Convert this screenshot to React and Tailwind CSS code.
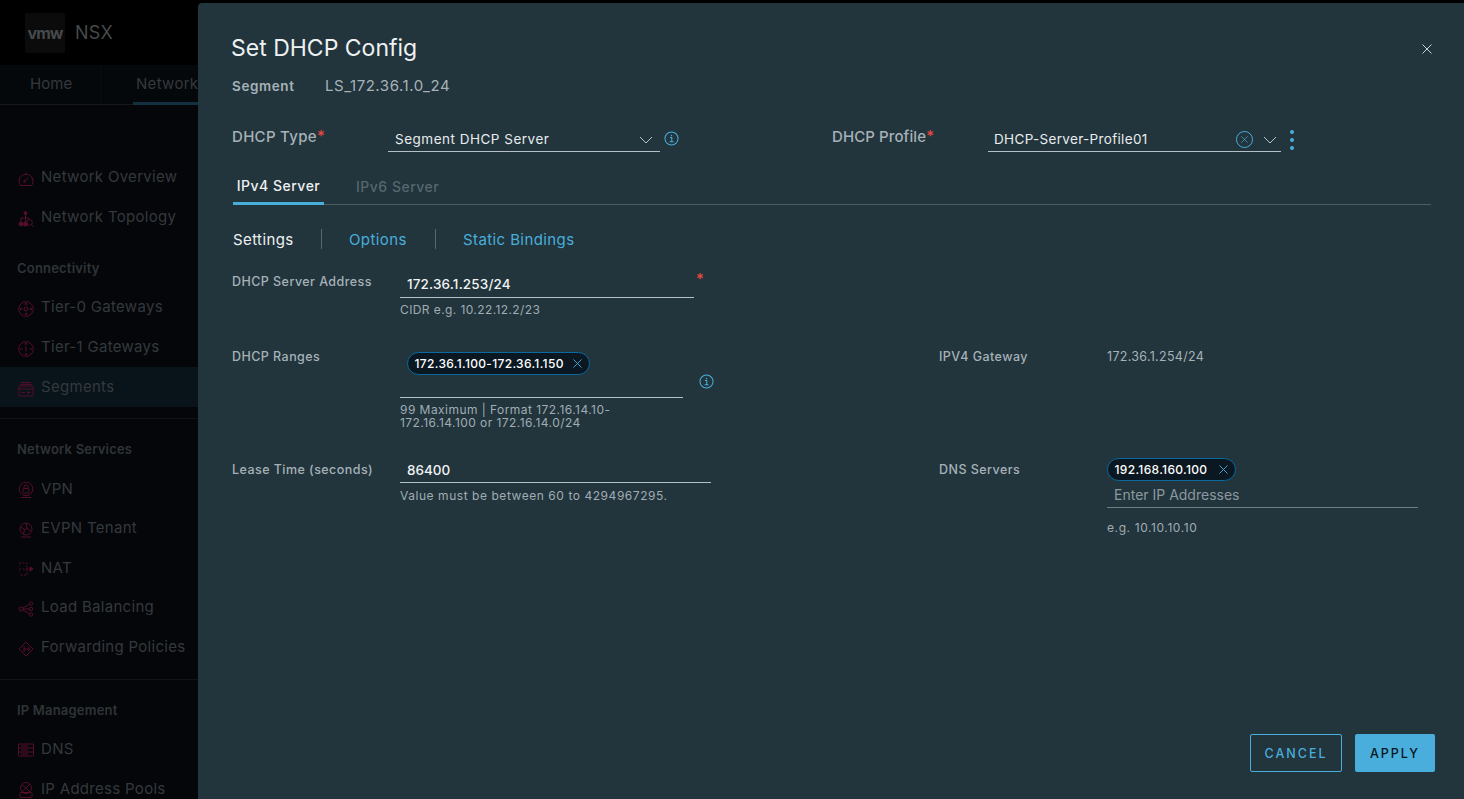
const C = "#560e2c";

function Ic({ children }) {
  return (
    <svg viewBox="0 0 16 16" width="16" height="16" fill="none" stroke={C} strokeWidth="1" className="shrink-0 mt-[3px]">
      {children}
    </svg>
  );
}

const icons = {
  overview: <><path d="M2.500 14.500h11a7 7 0 1 0-11 0z" /><path d="M6.500 10.500L10.500 6.500" /><circle cx="6.500" cy="10.500" r="1" /><path d="M8 1.500V3M1 8h1.500M13.500 8H15" /></>,
  topology: <><circle cx="7.500" cy="2" r="1.500" fill={C} /><path d="M7.500 3.500V7M3 11V7h8v1.500M7.500 7v4" /><circle cx="3" cy="13" r="2" fill={C} /><circle cx="7.500" cy="13" r="2" fill={C} /><circle cx="11.500" cy="11.500" r="2.800" /><path d="M13.500 13.500l2 2" /></>,
  t0: <><circle cx="8" cy="8" r="7.300" /><circle cx="8" cy="8" r="2" /><path d="M8 2v2.500M8 11.500V14M2 8h2.500M11.500 8H14" /><path d="M6.800 3.500L8 2l1.200 1.500M6.800 12.500L8 14l1.200-1.500M3.500 6.800L2 8l1.500 1.200M12.500 6.800L14 8l-1.500 1.200" /></>,
  t1: <><circle cx="8" cy="8" r="7.300" /><path d="M8 2v2M8 12v2M7 6.500l1-.800v4.800M2 8h2.500M11.500 8H14" /><path d="M6.800 3.200L8 2l1.200 1.200M6.800 12.800L8 14l1.200-1.200" /></>,
  seg: <><rect x="1" y="5" width="14" height="10" rx="1" /><path d="M3 1.500h10M2 3.300h12M1 8h14M3.500 11.500h3.500M9 11.500h3.500M10.700 10v3" /></>,
  vpn: <><circle cx="8" cy="7" r="6.800" /><rect x="5" y="6.500" width="6" height="4.500" rx="0.500" /><path d="M6 6.500V5a2 2 0 0 1 4 0v1.500M3 15.500h10" /></>,
  evpn: <><circle cx="8" cy="7" r="6" /><path d="M2.500 5l4 2.500 2.500-1.500 3.500 3.500M6.500 7.500L5.500 12.500M9 6l-1-5M3 15h10" /></>,
  nat: <><path d="M1 2h8v12H1M1 8h12M1 4.500v1M1 10.500v1" strokeDasharray="2 1.500" /><path d="M12 5.800L15 8l-3 2.200z" fill={C} /></>,
  lb: <><circle cx="3" cy="8" r="2" /><circle cx="13" cy="2.500" r="1.700" /><circle cx="13" cy="8" r="1.700" /><circle cx="13" cy="13.500" r="1.700" /><path d="M5 7l6.500-4M5 9l6.500 4M5 8h6.300" /></>,
  fp: <><path d="M8 1l7 7-7 7-7-7z" /><path d="M6 5v6M6 8h6M10 6l2 2-2 2" /></>,
  dns: <><rect x="0.500" y="2" width="15" height="12" rx="0.500" /><path d="M0.500 6h15M0.500 10h15M3 4h7M3 8h7M3 12h7" /></>,
  pools: <><circle cx="8" cy="6" r="5.500" /><path d="M4 10l8-8M4 2.500l8 7.500" /><rect x="2" y="10.500" width="12" height="5" rx="1" /></>,
};

function Item({ icon, label, active, h = "h-[40px]" }) {
  return (
    <div className={`flex items-center gap-[7px] pl-[18px] ${h} ${active ? "bg-[#09131a]" : ""}`}>
      <Ic>{icons[icon]}</Ic>
      <span className="text-[15px] tracking-[0.3px] text-[#34393d] whitespace-nowrap">{label}</span>
    </div>
  );
}

function Heading({ children, className = "" }) {
  return (
    <div className={`pl-[17px] h-5 pt-px flex items-center text-[13px] tracking-[0.2px] font-semibold text-[#2f3438] whitespace-nowrap ${className}`}>
      {children}
    </div>
  );
}

function Sidebar() {
  return (
    <aside className="w-[198px] shrink-0 h-full overflow-hidden bg-[#040609]">
      <div className="h-[65px] bg-black flex items-center pl-[25px]">
        <div className="w-10 h-10 bg-[#0b0b0b] rounded-[2px] flex items-center justify-center text-[#45494c] text-[16px] font-bold tracking-[-1px]">vmw</div>
        <span className="ml-[10px] text-[18px] tracking-[0.3px] text-[#45494c]">NSX</span>
      </div>
      <div className="h-[40px] flex border-b border-[#16191c] bg-[#05080b]">
        <div className="w-[100px] pl-[30px] flex items-center text-[15px] tracking-[0.1px] text-[#34393d]">Home</div>
        <div className="w-[98px] pl-[33px] relative flex items-center text-[15px] tracking-[0.3px] text-[#34393d] border-l border-[#0a0d10]">
          <span className="pl-[2px] whitespace-nowrap">Network</span>
          <div className="absolute left-[32px] right-0 bottom-[-1px] h-[3px] bg-[#12303f]" />
        </div>
      </div>
      <nav className="pt-[52px]">
        <Item icon="overview" label="Network Overview" />
        <Item icon="topology" label="Network Topology" />
        <Heading className="mt-[21px] mb-[9px]">Connectivity</Heading>
        <Item icon="t0" label="Tier-0 Gateways" />
        <Item icon="t1" label="Tier-1 Gateways" />
        <Item icon="seg" label="Segments" active />
        <div className="mt-[11px] h-px bg-[#111417]" />
        <Heading className="mt-[20px] mb-[10px]">Network Services</Heading>
        <Item icon="vpn" label="VPN" h="h-[39.600px]" />
        <Item icon="evpn" label="EVPN Tenant" h="h-[39.600px]" />
        <Item icon="nat" label="NAT" h="h-[39.600px]" />
        <Item icon="lb" label="Load Balancing" h="h-[39.600px]" />
        <Item icon="fp" label="Forwarding Policies" h="h-[39.600px]" />
        <div className="mt-[12px] h-px bg-[#111417]" />
        <Heading className="mt-[20px] mb-[9px]">IP Management</Heading>
        <Item icon="dns" label="DNS" />
        <Item icon="pools" label="IP Address Pools" />
      </nav>
    </aside>
  );
}

function Chevron() {
  return (
    <svg viewBox="0 0 14 8" width="14" height="8" fill="none" stroke="#b4c0c5" strokeWidth="1" className="shrink-0">
      <path d="M1 1l6 6 6-6" />
    </svg>
  );
}

function Info({ className = "" }) {
  return (
    <svg viewBox="0 0 16 16" width="15" height="15" fill="none" stroke="#49aedb" strokeWidth="1.100" className={"shrink-0 " + className}>
      <circle cx="8" cy="8" r="7" />
      <circle cx="8" cy="4.700" r="0.800" fill="#49aedb" stroke="none" />
      <path d="M6.300 7h2v4.500M6 11.500h4.200" />
    </svg>
  );
}

function X({ size = 9, color = "#49aedb" }) {
  return (
    <svg viewBox="0 0 10 10" width={size} height={size} fill="none" stroke={color} strokeWidth="1" className="shrink-0">
      <path d="M0.500 0.500l9 9M9.500 0.500l-9 9" />
    </svg>
  );
}

function Chip({ children, width }) {
  return (
    <div className={`h-[23px] flex items-center justify-between rounded-full border border-[#0a6aa0] bg-[#0b1821] pl-[6.500px] pr-[7px] text-[12px] tracking-[0.33px] font-medium text-white ${width}`}>
      <span className="whitespace-nowrap">{children}</span>
      <X />
    </div>
  );
}

function Star() {
  return <span className="text-[#e8483f] text-[15px] leading-none relative top-[-1px]">*</span>;
}

function Label({ children, className = "" }) {
  return <div className={`pt-[2px] text-[12.500px] tracking-[0.45px] font-medium text-[#a6b2b8] whitespace-nowrap ${className}`}>{children}</div>;
}

function Help({ children, className = "tracking-[0.45px]" }) {
  return <div className={`text-[12px] leading-[13px] text-[#a0adb3] ${className}`}>{children}</div>;
}

function Modal() {
  return (
    <section className="absolute left-[198px] top-[3px] right-0 bottom-0 rounded-tl-[4px] bg-[#22343c] pl-[34px] pt-[29px] flex flex-col">
      <div className="h-8 flex items-center justify-between pr-[32px]">
        <h1 className="text-[23px] ml-[-1px] text-[#eef1f2]">Set DHCP Config</h1>
        <span className="pt-[2px]"><X size={10} color="#c8d2d6" /></span>
      </div>

      <div className="mt-3 h-5 flex items-center">
        <span className="w-[93px] text-[13.500px] tracking-[0.6px] font-semibold text-[#a6b2b8]">Segment</span>
        <span className="text-[15px] tracking-[0.55px] text-[#a6b2b8]">LS_172.36.1.0_24</span>
      </div>

      <div className="mt-7 h-7 flex items-start">
        <div className="w-[600px] flex items-start">
          <div className="w-[156px] pt-px text-[15px] tracking-[0.3px] leading-6 text-[#a6b2b8] font-medium">DHCP Type<Star /></div>
          <div className="w-[272px] h-7 border-b border-[#b4c0c5] flex items-center justify-between pl-[7px] pr-[7px] text-[13.500px] tracking-[0.5px] text-[#e8ecee] pt-[4px]">
            <span>Segment DHCP Server</span>
            <Chevron />
          </div>
          <Info className="ml-[4px] mt-[7px]" />
        </div>
        <div className="flex items-start">
          <div className="w-[156px] pt-px text-[15px] tracking-[0.1px] leading-6 text-[#a6b2b8] font-medium">DHCP Profile<Star /></div>
          <div className="w-[293px] h-7 border-b border-[#b4c0c5] flex items-center pl-[6px] pr-[4px] text-[13.500px] tracking-[0.33px] text-[#e8ecee] pt-[4px]">
            <span className="flex-1">DHCP-Server-Profile01</span>
            <span className="w-[17px] h-[17px] rounded-full border border-[#49aedb] flex items-center justify-center mr-[10px]"><X size={7} /></span>
            <Chevron />
          </div>
          <div className="ml-[9px] mt-[6px] flex flex-col gap-[4px]">
            <span className="w-1 h-1 rounded-full bg-[#49aedb]" />
            <span className="w-1 h-1 rounded-full bg-[#49aedb]" />
            <span className="w-1 h-1 rounded-full bg-[#49aedb]" />
          </div>
        </div>
      </div>

      <div className="mt-4 ml-px mr-[33px] h-[37px] flex border-b border-[#4b5c64]">
        <div className="w-[91px] h-[37px] border-b-[3px] border-[#49aedb] flex items-center justify-center text-[14px] tracking-[0.5px] font-medium text-[#eef1f2] pt-px">IPv4 Server</div>
        <div className="ml-[32px] flex items-center text-[14px] tracking-[0.5px] font-medium text-[#56676e]">IPv6 Server</div>
      </div>

      <div className="mt-[22px] ml-px h-6 flex items-center text-[15px] tracking-[0.4px]">
        <span className="w-[88px] text-[#eef1f2] pt-[2px]">Settings</span>
        <span className="w-px h-5 bg-[#56676e]" />
        <span className="ml-[27px] w-[86px] text-[#49aedb] pt-[2px]">Options</span>
        <span className="w-px h-5 bg-[#56676e]" />
        <span className="ml-[27px] text-[#49aedb] pt-[2px]">Static Bindings</span>
      </div>

      <div className="mt-5 grid grid-cols-[707px_1fr] grid-rows-[75px_113px_auto]">
        <div className="flex">
          <Label className="w-[168px]">DHCP Server Address</Label>
          <div>
            <div className="w-[294px] h-[27px] border-b border-[#b4c0c5] pl-[7px] flex items-center text-[13.500px] tracking-[0.15px] font-medium text-[#f0f3f4] relative">
              172.36.1.253/24
              <span className="absolute right-[-10px] top-[-1px]"><Star /></span>
            </div>
            <Help className="mt-[5px] tracking-[0.4px]">CIDR e.g. 10.22.12.2/23</Help>
          </div>
        </div>
        <div />

        <div className="flex">
          <Label className="w-[168px]">DHCP Ranges</Label>
          <div className="relative">
            <div className="w-[283px] h-[52px] border-b border-[#b4c0c5] pl-[7px] pt-[6px]">
              <Chip width="w-[183px]">172.36.1.100-172.36.1.150</Chip>
            </div>
            <Info className="absolute left-[299px] top-[28px]" />
            <Help className="mt-[5px] w-[240px] tracking-[0.45px]">99 Maximum | Format 172.16.14.10-172.16.14.100 or 172.16.14.0/24</Help>
          </div>
        </div>
        <div className="flex">
          <Label className="w-[168px]">IPV4 Gateway</Label>
          <span className="pt-[2px] text-[12.500px] tracking-[0.3px] text-[#a6b2b8]">172.36.1.254/24</span>
        </div>

        <div className="flex">
          <Label className="w-[168px]">Lease Time (seconds)</Label>
          <div>
            <div className="w-[311px] h-[24px] border-b border-[#b4c0c5] pl-[7px] flex items-center text-[13.500px] font-medium text-[#f0f3f4]">86400</div>
            <Help className="mt-[6px] tracking-[0.55px]">Value must be between 60 to 4294967295.</Help>
          </div>
        </div>
        <div className="flex">
          <Label className="w-[168px]">DNS Servers</Label>
          <div className="mt-[-1px]">
            <Chip width="w-[129px]">192.168.160.100</Chip>
            <div className="w-[311px] h-[27px] border-b border-[#6f7f86] pl-[7px] flex items-center text-[14px] text-[#8b999f]">Enter IP Addresses</div>
            <Help className="mt-[13px] tracking-[0.6px]">e.g. 10.10.10.10</Help>
          </div>
        </div>
      </div>

      <div className="mt-auto mb-[27px] mr-[29px] flex justify-end gap-[13px]">
        <button className="w-[92px] h-[38px] pt-[2px] rounded-[2px] border border-[#49aedb] text-[#49aedb] text-[12.500px] font-medium tracking-[2px]">CANCEL</button>
        <button className="w-[80px] h-[38px] pt-[2px] rounded-[2px] bg-[#49aedb] text-[#06131a] text-[12.500px] font-medium tracking-[2px]">APPLY</button>
      </div>
    </section>
  );
}

export default function App() {
  return (
    <div className="relative w-[1464px] h-[799px] overflow-hidden bg-black font-['Inter',sans-serif] flex">
      <Sidebar />
      <Modal />
    </div>
  );
}
